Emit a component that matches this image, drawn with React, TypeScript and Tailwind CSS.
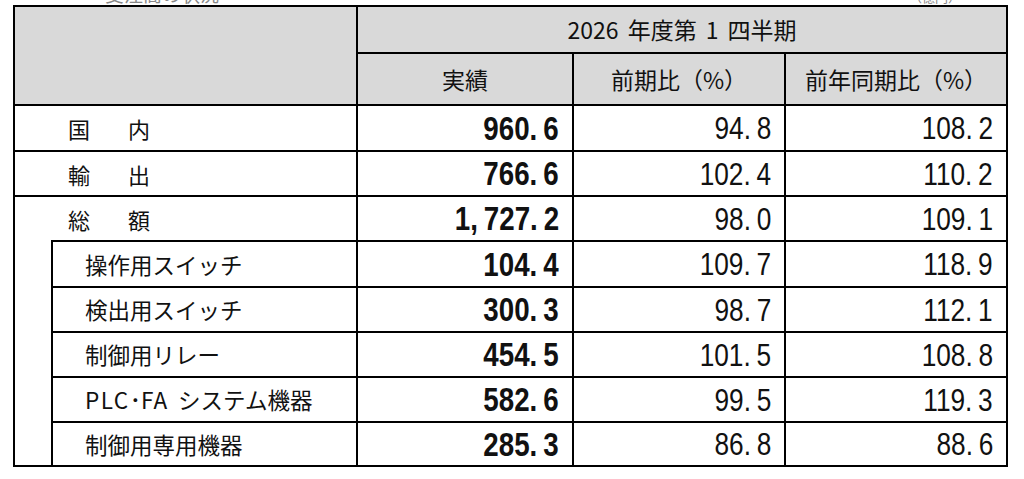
import React from "react";

const mainRows = [
  { a: "国", b: "内", v: ["960.6", "94.8", "108.2"] },
  { a: "輸", b: "出", v: ["766.6", "102.4", "110.2"] },
  { a: "総", b: "額", v: ["1,727.2", "98.0", "109.1"] },
];

const subRows = [
  { label: "操作用スイッチ", v: ["104.4", "109.7", "118.9"] },
  { label: "検出用スイッチ", v: ["300.3", "98.7", "112.1"] },
  { label: "制御用リレー", v: ["454.5", "101.5", "108.8"] },
  { label: "PLC", v: ["582.6", "99.5", "119.3"] },
  { label: "制御用専用機器", v: ["285.3", "86.8", "88.6"] },
];

function Num({ v, bold }: { v: string; bold?: boolean }) {
  const parts = v.split(/([.,])/);
  return (
    <span
      className={
        bold
          ? "inline-block origin-right scale-x-[0.84] whitespace-nowrap font-bold text-[33px] leading-none font-['Liberation_Sans',sans-serif] text-[#111]"
          : "inline-block origin-right scale-x-[0.82] whitespace-nowrap text-[32px] leading-none font-['Liberation_Sans',sans-serif] text-[#111]"
      }
    >
      {parts.map((p, i) =>
        p === "." || p === "," ? (
          <span key={i} className="mr-[7px]">
            {p}
          </span>
        ) : (
          <span key={i}>{p}</span>
        )
      )}
    </span>
  );
}

function NumCell({ v, bold }: { v: string; bold?: boolean }) {
  return (
    <div className="border-l-2 border-t-2 border-black flex items-center justify-end pr-[13px] bg-white">
      <Num v={v} bold={bold} />
    </div>
  );
}

function SubLabel({ label }: { label: string }) {
  if (label === "PLC") {
    return (
      <span className="whitespace-nowrap">
        <span className="tracking-[1.5px]">PLC</span>
        <span>･</span>
        <span className="tracking-[1px]">FA</span>
        <span className="ml-[10px]">システム機器</span>
      </span>
    );
  }
  return <span>{label}</span>;
}

export default function App() {
  return (
    <div className="w-[1024px] h-[479px] bg-white overflow-hidden font-['Noto_Sans_CJK_JP',sans-serif] text-[#111]">
      <div className="h-[5px] overflow-hidden flex items-end text-[#888]">
        <span className="ml-[105px] mb-[2px] text-[19px] leading-[19px] whitespace-nowrap">受注高の状況</span>
        <span className="ml-[690px] mb-[2px] text-[13px] leading-[13px] whitespace-nowrap">（億円）</span>
      </div>
      <div className="ml-[13px] w-[995px] grid grid-cols-[38px_305px_216px_212px_222px] grid-rows-[47px_52px_46px_45px_45px_46px_45px_45px_45px_44px] border-r-2 border-b-2 border-black">
        <div className="col-span-2 row-span-2 bg-[#d9d9d9] border-l-2 border-t-2 border-black" />
        <div className="col-span-3 bg-[#d9d9d9] border-l-2 border-t-2 border-black flex items-center justify-center text-[23px] leading-none whitespace-nowrap">
          <span>2026</span>
          <span className="ml-[9px]">年度第</span>
          <span className="ml-[9px]">1</span>
          <span className="ml-[9px]">四半期</span>
        </div>
        <div className="bg-[#d9d9d9] border-l-2 border-t-2 border-black flex items-center justify-center text-[23px] leading-none">
          実績
        </div>
        <div className="bg-[#d9d9d9] border-l-2 border-t-2 border-black flex items-center justify-center text-[23px] leading-none">
          前期比（%）
        </div>
        <div className="bg-[#d9d9d9] border-l-2 border-t-2 border-black flex items-center justify-center text-[23px] leading-none">
          前年同期比（%）
        </div>

        {mainRows.map((r) => (
          <React.Fragment key={r.a}>
            <div className="col-span-2 border-l-2 border-t-2 border-black flex items-center pl-[53px] text-[22px] leading-none">
              <span className="w-[60px]">{r.a}</span>
              <span>{r.b}</span>
            </div>
            <NumCell v={r.v[0]} bold />
            <NumCell v={r.v[1]} />
            <NumCell v={r.v[2]} />
          </React.Fragment>
        ))}

        {subRows.map((r, i) => (
          <React.Fragment key={r.label}>
            {i === 0 && <div className="row-span-5 border-l-2 border-black" />}
            <div className="border-l-2 border-t-2 border-black flex items-center pl-[32px] text-[22.5px] leading-none whitespace-nowrap">
              <SubLabel label={r.label} />
            </div>
            <NumCell v={r.v[0]} bold />
            <NumCell v={r.v[1]} />
            <NumCell v={r.v[2]} />
          </React.Fragment>
        ))}
      </div>
    </div>
  );
}
